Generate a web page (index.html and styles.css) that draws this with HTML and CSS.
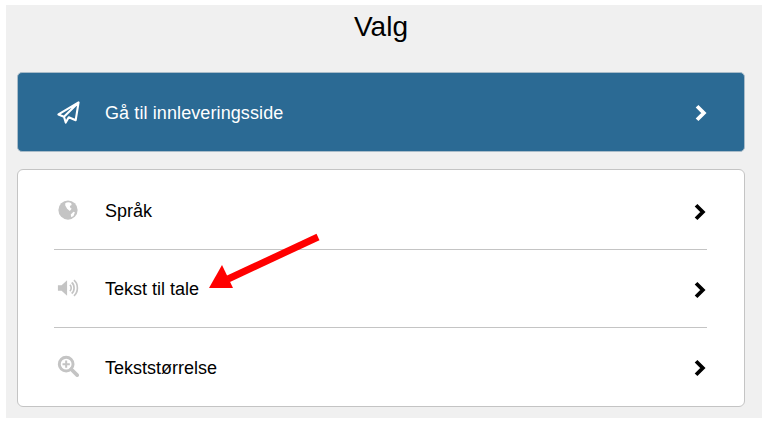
FILE: index.html
```html
<!DOCTYPE html>
<html lang="no">
<head>
  <meta charset="UTF-8">
  <meta name="viewport" content="width=device-width, initial-scale=1.0">
  <title>Valg</title>
  <link rel="stylesheet" href="styles.css">
</head>
<body>
  <div class="panel">
    <h1>Valg</h1>

    <!-- Innlevering -->
    <a href="#" class="rad knapp">
      <svg class="ikon" viewBox="0 0 24 24" fill="none" stroke="#fff" stroke-width="2.200" stroke-linejoin="round">
        <path d="M22.500 1.500L1.500 14l5.800 2.400L22.500 1.500L19.500 20l-7.200-3-3.200 5.500-1.800-6.100"/>
      </svg>
      <span class="tekst">Gå til innleveringsside</span>
      <svg class="pil" viewBox="0 0 12 16" fill="none" stroke="#fff" stroke-width="3.400">
        <path d="M2.500 2l6 6-6 6"/>
      </svg>
    </a>

    <!-- Innstillinger -->
    <div class="liste">
      <a href="#" class="rad">
        <svg class="ikon" viewBox="0 0 24 24">
          <circle cx="12" cy="12" r="10.500" fill="#c4c4c4"/>
          <path d="M9 4.500c2-1.200 5-1 6.500 0l.5 2-2 1 .5 2 1.500 1-2 2.500-3-2.500-1.500-2.500L9 7z" fill="#fff"/>
          <path d="M15 17l3-3 1.500.5-1.500 4-2.500 1.500z" fill="#fff"/>
        </svg>
        <span class="tekst">Språk</span>
        <svg class="pil" viewBox="0 0 12 16" fill="none" stroke="#000" stroke-width="3.400">
          <path d="M2.500 2l6 6-6 6"/>
        </svg>
      </a>
      <a href="#" class="rad">
        <svg class="ikon" viewBox="0 0 24 24" fill="none" stroke="#c4c4c4" stroke-width="1.800">
          <path d="M1 9h4l6-5.500v17L5 15H1z" fill="#c4c4c4" stroke="none"/>
          <path d="M14 8.500c2 1.500 2 5.500 0 7"/>
          <path d="M16 6c3.500 2.500 3.500 9.500 0 12"/>
          <path d="M18.500 3.500c5 4 5 13 0 17"/>
        </svg>
        <span class="tekst">Tekst til tale</span>
        <svg class="pil" viewBox="0 0 12 16" fill="none" stroke="#000" stroke-width="3.400">
          <path d="M2.500 2l6 6-6 6"/>
        </svg>
      </a>
      <a href="#" class="rad">
        <svg class="ikon" viewBox="0 0 24 24" fill="none" stroke="#c4c4c4" stroke-width="3.200">
          <circle cx="10" cy="10" r="7.500"/>
          <path d="M15.500 15.500L22 22" stroke-width="4" stroke-linecap="round"/>
          <path d="M10 6v8M6 10h8" stroke-width="2.200"/>
        </svg>
        <span class="tekst">Tekststørrelse</span>
        <svg class="pil" viewBox="0 0 12 16" fill="none" stroke="#000" stroke-width="3.400">
          <path d="M2.500 2l6 6-6 6"/>
        </svg>
      </a>
    </div>
  </div>

  <!-- Rød pil lagt oppå skjermbildet -->
  <svg class="markering" width="767" height="423" viewBox="0 0 767 423">
    <path d="M318 237L228 279" stroke="#f00" stroke-width="7" fill="none"/>
    <path d="M209 288L222 265L233 288z" fill="#f00"/>
  </svg>
</body>
</html>
```

FILE: styles.css
```css
/* Globale stiler */
* {
  margin: 0;
  padding: 0;
  box-sizing: border-box;
  font-family: "Liberation Sans", Arial, sans-serif;
}

html, body {
  height: 100%;
  overflow: hidden;
}

body {
  background-color: #fff;
  color: #000;
  padding: 5px 5px 5px 6px;
  position: relative;
}

.panel {
  height: 413px;
  background-color: #f0f0f0;
  padding: 0 17px 0 11px;
}

h1 {
  font-size: 28px;
  font-weight: normal;
  text-align: center;
  line-height: 44px;
  margin-bottom: 23px;
}

/* Rader */
.rad {
  display: flex;
  align-items: center;
  height: 78px;
  padding-top: 2px;
  color: #000;
  text-decoration: none;
  font-size: 18px;
  border-bottom: 1px solid #c4c4c4;
}

.rad:last-child {
  border-bottom: none;
}

.ikon {
  width: 22px;
  height: 22px;
  margin: 0 26px 4px 3px;
  flex: none;
}

.tekst {
  flex: 1;
}

.pil {
  width: 14px;
  height: 18px;
  flex: none;
}

/* Blå knapp */
.knapp {
  height: 80px;
  background-color: #2b6a94;
  color: #fff;
  border: 1px solid #a9bcc9;
  border-radius: 5px;
  padding: 2px 36px 0 36px;
  margin-bottom: 17px;
  letter-spacing: 0.1px;
}

.knapp .ikon {
  width: 23px;
  height: 23px;
  margin: 0 25px 2px 3px;
}

/* Hvit liste */
.liste {
  background-color: #fff;
  border: 1px solid #c4c4c4;
  border-radius: 6px;
  padding: 2px 37px 0 36px;
  height: 238px;
}

.markering {
  position: absolute;
  top: 0;
  left: 0;
  pointer-events: none;
}
```
